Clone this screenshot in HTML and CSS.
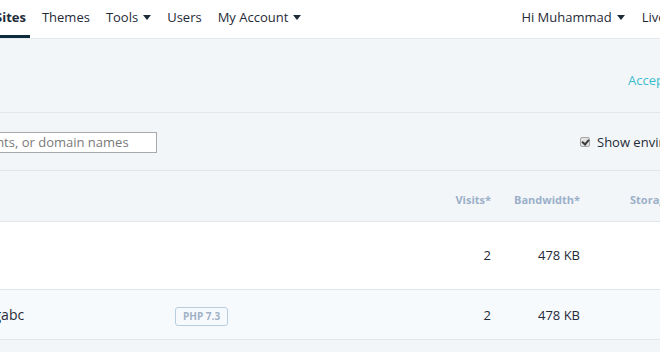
FILE: index.html
```html
<!DOCTYPE html>
<html>
<head>
<meta charset="utf-8">
<link rel="stylesheet" href="styles.css">
</head>
<body>
<header class="nav">
  <ul class="nav-left">
    <li class="nav-item active">Sites</li>
    <li class="nav-item">Themes</li>
    <li class="nav-item">Tools <span class="caret"></span></li>
    <li class="nav-item">Users</li>
    <li class="nav-item">My Account <span class="caret"></span></li>
  </ul>
  <ul class="nav-right">
    <li class="nav-item">Hi Muhammad <span class="caret"></span></li>
    <li class="nav-item">Live Chat</li>
  </ul>
</header>
<section class="banner">
  <a class="accept">Accept invitation</a>
</section>
<section class="filters">
  <input class="search" type="text" placeholder="Search by site names, environments, or domain names">
  <label class="show-env"><span class="check"></span>Show environments</label>
</section>
<div class="table">
  <div class="row head">
    <div class="cell"></div>
    <div class="cell"></div>
    <div class="cell num">Visits*</div>
    <div class="cell num">Bandwidth*</div>
    <div class="cell num">Storage*</div>
  </div>
  <div class="row tall">
    <div class="cell"></div>
    <div class="cell"></div>
    <div class="cell num">2</div>
    <div class="cell num">478 KB</div>
    <div class="cell num"></div>
  </div>
  <div class="row alt">
    <div class="cell name">blogabc</div>
    <div class="cell"><span class="badge">PHP 7.3</span></div>
    <div class="cell num">2</div>
    <div class="cell num">478 KB</div>
    <div class="cell num"></div>
  </div>
</div>
</body>
</html>
```
FILE: styles.css
```css
html, body {
  margin: 0;
  padding: 0;
}
body {
  width: 660px;
  height: 352px;
  overflow: hidden;
  background: #f3f6f9;
  font-family: "Open Sans", "Liberation Sans", sans-serif;
  font-size: 13px;
  color: #1f2b37;
}
ul {
  list-style: none;
  margin: 0;
  padding: 0;
}
.nav {
  height: 38px;
  background: #fff;
  border-bottom: 1px solid #e3e8ee;
  display: flex;
  justify-content: space-between;
  white-space: nowrap;
}
.nav-left, .nav-right {
  display: flex;
  gap: 8px;
}
.nav-left {
  margin-left: -9px;
}
.nav-right {
  margin-right: -41px;
  gap: 9px;
}
.nav-item {
  padding: 0 4px 5px;
  height: 38px;
  display: flex;
  align-items: center;
  gap: 5px;
  box-sizing: border-box;
}
.nav-item.active {
  font-weight: 700;
  border-bottom: 3px solid #0c2a3c;
  padding-bottom: 2px;
  padding-left: 4px;
}
.caret {
  width: 0;
  height: 0;
  border-left: 4px solid transparent;
  border-right: 4px solid transparent;
  border-top: 5px solid #1f2b37;
  margin-top: 1px;
}
.banner {
  height: 74px;
  border-bottom: 1px solid #e1e6eb;
  display: flex;
  align-items: center;
  padding-left: 628px;
  white-space: nowrap;
  padding-top: 9px;
  box-sizing: border-box;
}
.accept {
  color: #3bbccd;
  font-size: 13px;
}
.filters {
  height: 58px;
  border-bottom: 1px solid #e1e6eb;
  display: flex;
  align-items: center;
  justify-content: space-between;
  white-space: nowrap;
  box-sizing: border-box;
}
.search {
  width: 368px;
  height: 21px;
  box-sizing: border-box;
  margin-left: -211px;
  border: 1px solid #a9a9a9;
  border-radius: 0;
  padding: 0 6px;
  font-family: "Open Sans", "Liberation Sans", sans-serif;
  font-size: 13px;
  background: #fff;
  margin-top: 1px;
}
.search::placeholder {
  color: #7a7a7a;
}
.show-env {
  display: flex;
  align-items: center;
  gap: 7px;
  margin-right: -61px;
  width: 141px;
  color: #1f2b37;
}
.check {
  width: 10px;
  height: 10px;
  box-sizing: border-box;
  border: 1px solid #a5a5a5;
  border-radius: 2px;
  background: #e2e2e2;
  position: relative;
}
.check::after {
  content: "";
  position: absolute;
  left: 2px;
  top: 0px;
  width: 3px;
  height: 5px;
  border-right: 2px solid #3a3a3a;
  border-bottom: 2px solid #3a3a3a;
  transform: rotate(40deg);
}
.table {
  width: 678px;
}
.row {
  display: grid;
  grid-template-columns: 175px 236px 80px 89px 98px;
  align-items: center;
  border-bottom: 1px solid #e1e6eb;
  white-space: nowrap;
  box-sizing: border-box;
}
.row.head {
  height: 51px;
  font-size: 11px;
  font-weight: 700;
  color: #9bb0c9;
  padding-top: 6px;
}
.row.tall {
  height: 68px;
  background: #fff;
  padding-bottom: 2px;
}
.row.alt {
  height: 50px;
  background: #f7fafd;
  padding-top: 1px;
}
.cell.num {
  text-align: right;
}
.cell.name {
  margin-left: -27px;
  font-size: 14px;
  margin-top: -1px;
}
.badge {
  display: inline-block;
  border: 1px solid #b9cde0;
  border-radius: 3px;
  color: #9fb1c7;
  font-size: 10px;
  font-weight: 700;
  padding: 0 7px;
  height: 19px;
  line-height: 17px;
  box-sizing: border-box;
  margin-top: 3px;
}
```
